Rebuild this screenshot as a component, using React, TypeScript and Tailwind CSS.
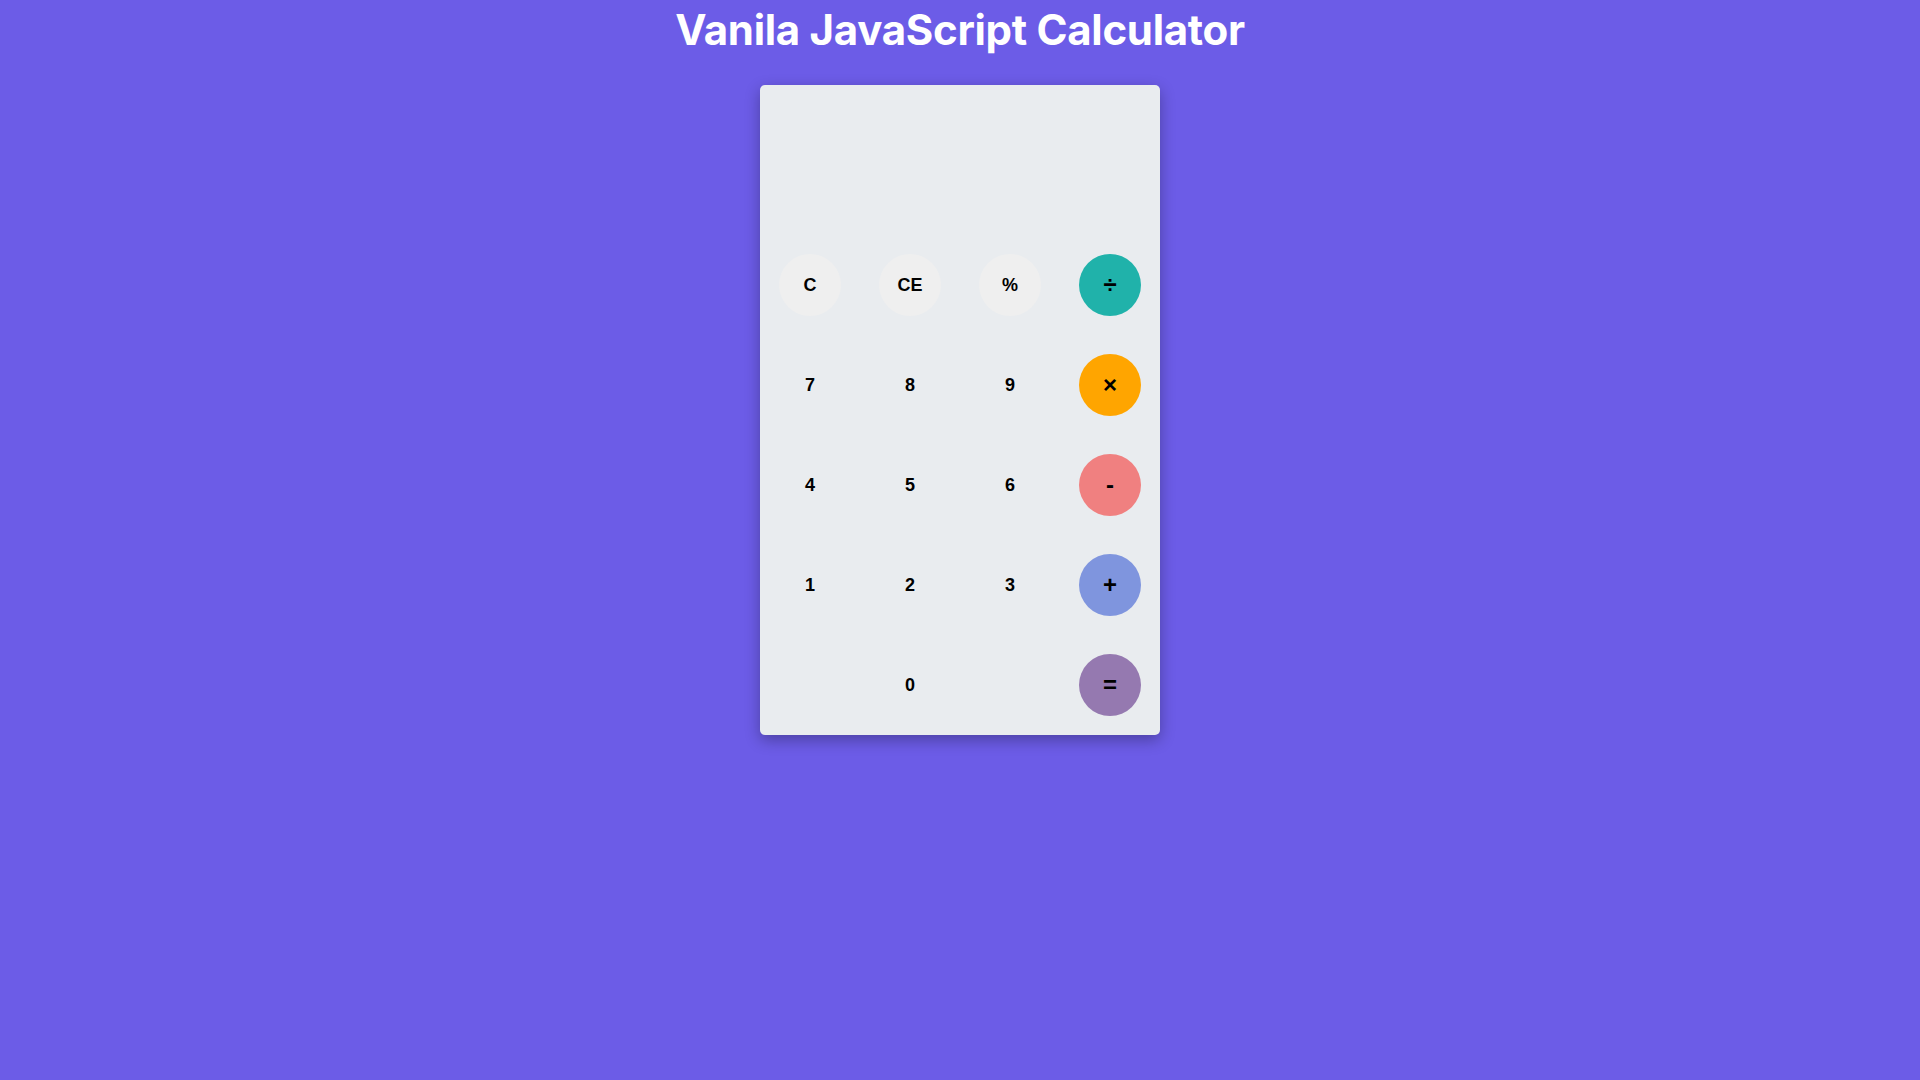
import React from "react";

type Btn = { label: string; cls?: string; op?: boolean };

const rows: Btn[][] = [
  [
    { label: "C", cls: "bg-[#efefef]" },
    { label: "CE", cls: "bg-[#efefef]" },
    { label: "%", cls: "bg-[#efefef]" },
    { label: "÷", cls: "bg-[#20b2aa]", op: true },
  ],
  [{ label: "7" }, { label: "8" }, { label: "9" }, { label: "×", cls: "bg-[#ffa500]", op: true }],
  [{ label: "4" }, { label: "5" }, { label: "6" }, { label: "-", cls: "bg-[#f08080]", op: true }],
  [{ label: "1" }, { label: "2" }, { label: "3" }, { label: "+", cls: "bg-[#7f95de]", op: true }],
  [{ label: "" }, { label: "0" }, { label: "" }, { label: "=", cls: "bg-[#9579b0]", op: true }],
];

export default function App() {
  return (
    <div className="min-h-screen w-full bg-[#6c5ce7] flex flex-col items-center">
      <h1
        className="text-white font-bold text-[42px] leading-[50px] tracking-[-0.3px] mt-[5px] m-0"
        style={{ fontFamily: "Inter, 'Noto Sans', sans-serif" }}
      >
        Vanila JavaScript Calculator
      </h1>
      <div className="mt-[30px] w-[400px] bg-[#e9ecef] rounded-[5px] shadow-[0_5px_15px_rgba(0,0,0,0.3)]">
        <div className="h-[150px]" />
        <div className="grid grid-cols-4">
          {rows.flat().map((b, i) => (
            <div key={i} className="h-[100px] flex items-center justify-center">
              {b.label !== "" && (
                <div
                  className={`w-[62px] h-[62px] rounded-full flex items-center justify-center font-bold text-black ${b.op ? "text-[24px]" : "text-[18px]"} ${b.cls ?? ""}`}
                  style={{ fontFamily: "'Liberation Sans', Arial, sans-serif" }}
                >
                  {b.label}
                </div>
              )}
            </div>
          ))}
        </div>
      </div>
    </div>
  );
}
